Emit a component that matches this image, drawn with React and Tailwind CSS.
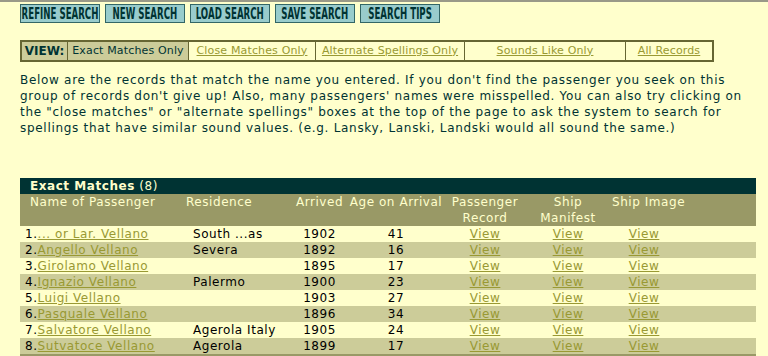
import React from "react";

const buttons = ["REFINE SEARCH", "NEW SEARCH", "LOAD SEARCH", "SAVE SEARCH", "SEARCH TIPS"];

const views = [
  { label: "Exact Matches Only", w: "w-[121px]", active: true },
  { label: "Close Matches Only", w: "w-[127px]" },
  { label: "Alternate Spellings Only", w: "w-[149px]" },
  { label: "Sounds Like Only", w: "w-[161px]" },
  { label: "All Records", w: "w-[86px]" },
];

const rows = [
  ["... or Lar. Vellano", "South ...as", "1902", "41"],
  ["Angello Vellano", "Severa", "1892", "16"],
  ["Girolamo Vellano", "", "1895", "17"],
  ["Ignazio Vellano", "Palermo", "1900", "23"],
  ["Luigi Vellano", "", "1903", "27"],
  ["Pasquale Vellano", "", "1896", "34"],
  ["Salvatore Vellano", "Agerola Italy", "1905", "24"],
  ["Sutvatoce Vellano", "Agerola", "1899", "17"],
];

function SearchButton({ label }) {
  return (
    <div className="w-[80px] h-[19px] border border-[#336666] bg-[#99cccc] flex items-center justify-center overflow-hidden">
      <span className="inline-block whitespace-nowrap font-['DejaVu_Sans_Condensed',sans-serif] font-bold text-[16px] leading-none text-[#003333] [transform:scaleX(0.6)]">
        {label}
      </span>
    </div>
  );
}

export default function App() {
  return (
    <div className="min-h-screen bg-[#ffffcc] font-['DejaVu_Sans',sans-serif] text-[12px] text-[#003333]">
      <div className="h-[2px] bg-[#999988]" />

      <div className="flex gap-[5px] pl-[20px] pt-[2px]">
        {buttons.map((b) => (
          <SearchButton key={b} label={b} />
        ))}
      </div>

      {/* view selector */}
      <div className="ml-[20px] mt-[17px] flex w-fit h-[22px] border-2 border-[#666633] text-[11px] tracking-[0.15px]">
        <div className="w-[46px] bg-[#cccc99] border-r border-[#666633] flex items-center justify-center font-bold text-[12px] tracking-normal">
          VIEW:
        </div>
        {views.map((v, i) => (
          <div
            key={v.label}
            className={
              v.active
                ? `${v.w} bg-[#cccc99] flex items-center justify-center border-r border-[#666633]`
                : i === views.length - 1
                ? `${v.w} flex items-center justify-center`
                : `${v.w} flex items-center justify-center border-r border-[#666633]`
            }
          >
            {v.active ? (
              <span>{v.label}</span>
            ) : (
              <a href="#" className="text-[#999933] underline">{v.label}</a>
            )}
          </div>
        ))}
      </div>

      <p className="ml-[20px] mt-[10px] w-[732px] leading-[16px] tracking-[0.7px]">
        Below are the records that match the name you entered. If you don't find the passenger you seek on this
        group of records don't give up! Also, many passengers' names were misspelled. You can also try clicking on
        the "close matches" or "alternate spellings" boxes at the top of the page to ask the system to search for
        spellings that have similar sound values. (e.g. Lansky, Lanski, Landski would all sound the same.)
      </p>

      <table className="ml-[20px] mt-[42px] w-[736px] border-collapse table-fixed leading-[16px] tracking-[0.55px]">
        <colgroup>
          <col className="w-[163px]" />
          <col className="w-[110px]" />
          <col className="w-[53px]" />
          <col className="w-[100px]" />
          <col className="w-[78px]" />
          <col className="w-[88px]" />
          <col className="w-[64px]" />
          <col />
        </colgroup>
        <thead>
          <tr className="bg-[#003333] text-[#ffffcc]">
            <th colSpan={8} className="h-[16px] p-0 pl-[10px] text-left font-normal">
              <span className="font-bold">Exact Matches</span> (8)
            </th>
          </tr>
          <tr className="bg-[#999966] text-[#ffffcc] align-top">
            <th className="h-[32px] p-0 pl-[10px] text-left font-normal">Name of Passenger</th>
            <th className="p-0 pl-[3px] text-left font-normal">Residence</th>
            <th className="p-0 text-center font-normal">Arrived</th>
            <th className="p-0 text-center font-normal whitespace-nowrap">Age on Arrival</th>
            <th className="p-0 text-center font-normal">Passenger<br />Record</th>
            <th className="p-0 text-center font-normal">Ship<br />Manifest</th>
            <th className="p-0 text-center font-normal whitespace-nowrap">Ship Image</th>
            <th className="p-0" />
          </tr>
        </thead>
        <tbody className="text-black">
          {rows.map((r, i) => (
            <tr key={i} className={i % 2 === 1 ? "bg-[#cccc99]" : "bg-[#ffffcc]"}>
              <td className="h-[16px] p-0 pl-[5px] whitespace-nowrap">
                {i + 1}.<a href="#" className="text-[#999933] underline">{r[0]}</a>
              </td>
              <td className="p-0 pl-[10px] whitespace-nowrap">{r[1]}</td>
              <td className="p-0 text-center">{r[2]}</td>
              <td className="p-0 text-center">{r[3]}</td>
              <td className="p-0 text-center"><a href="#" className="text-[#999933] underline">View</a></td>
              <td className="p-0 text-center"><a href="#" className="text-[#999933] underline">View</a></td>
              <td className="p-0 text-center"><a href="#" className="text-[#999933] underline">View</a></td>
              <td className="p-0" />
            </tr>
          ))}
          <tr className="bg-[#999966]">
            <td colSpan={8} className="h-[16px] p-0" />
          </tr>
        </tbody>
      </table>
    </div>
  );
}
